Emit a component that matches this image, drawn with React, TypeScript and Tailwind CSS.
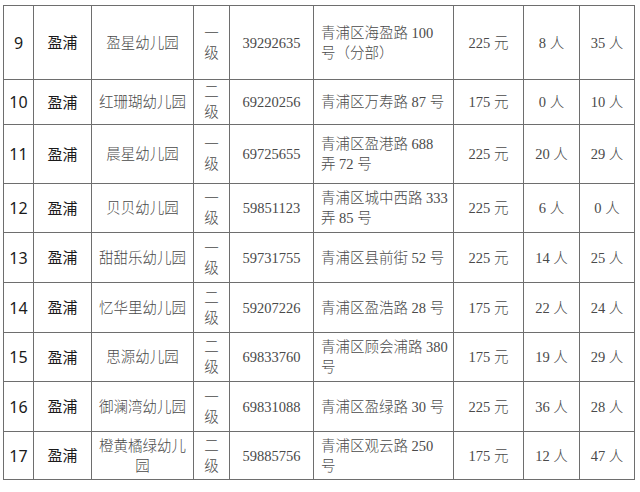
import React from "react";

type Row = {
  no: string;
  name: string;
  level: string;
  phone: string;
  addr: string;
  fee: string;
  a: string;
  b: string;
  h: number;
};

const rows: Row[] = [
  { no: "9", name: "盈星幼儿园", level: "一级", phone: "39292635", addr: "青浦区海盈路 100 号（分部）", fee: "225 元", a: "8 人", b: "35 人", h: 74 },
  { no: "10", name: "红珊瑚幼儿园", level: "二级", phone: "69220256", addr: "青浦区万寿路 87 号", fee: "175 元", a: "0 人", b: "10 人", h: 45 },
  { no: "11", name: "晨星幼儿园", level: "一级", phone: "69725655", addr: "青浦区盈港路 688 弄 72 号", fee: "225 元", a: "20 人", b: "29 人", h: 59 },
  { no: "12", name: "贝贝幼儿园", level: "一级", phone: "59851123", addr: "青浦区城中西路 333 弄 85 号", fee: "225 元", a: "6 人", b: "0 人", h: 49 },
  { no: "13", name: "甜甜乐幼儿园", level: "一级", phone: "59731755", addr: "青浦区县前街 52 号", fee: "225 元", a: "14 人", b: "25 人", h: 50 },
  { no: "14", name: "忆华里幼儿园", level: "二级", phone: "59207226", addr: "青浦区盈浩路 28 号", fee: "175 元", a: "22 人", b: "24 人", h: 50 },
  { no: "15", name: "思源幼儿园", level: "二级", phone: "69833760", addr: "青浦区顾会浦路 380 号", fee: "175 元", a: "19 人", b: "29 人", h: 49 },
  { no: "16", name: "御澜湾幼儿园", level: "一级", phone: "69831088", addr: "青浦区盈绿路 30 号", fee: "225 元", a: "36 人", b: "28 人", h: 50 },
  { no: "17", name: "橙黄橘绿幼儿园", level: "二级", phone: "59885756", addr: "青浦区观云路 250 号", fee: "175 元", a: "12 人", b: "47 人", h: 48 },
];

const sans = "font-['Noto_Sans','Noto_Sans_CJK_SC',sans-serif] text-[#1a1a1a]";
const serif = "font-['Liberation_Serif','Noto_Sans_CJK_SC',serif] font-light text-[#4a4a4a] text-[14.5px] leading-[20px]";
const td = "border border-[#6e6e6e] align-middle p-0";

export default function App() {
  return (
    <div className="w-[640px] h-[492px] bg-white pt-[5px] pl-[3px]">
      <table className="table-fixed border-collapse w-[631px]">
        <colgroup>
          <col className="w-[30px]" />
          <col className="w-[58px]" />
          <col className="w-[102px]" />
          <col className="w-[36px]" />
          <col className="w-[84px]" />
          <col className="w-[140px]" />
          <col className="w-[70px]" />
          <col className="w-[56px]" />
          <col className="w-[55px]" />
        </colgroup>
        <tbody>
          {rows.map((r) => (
            <tr key={r.no} style={{ height: r.h }}>
              <td className={`${td} ${sans} text-center text-[16px]`}>{r.no}</td>
              <td className={`${td} ${sans} text-center text-[15px]`}>盈浦</td>
              <td className={`${td} ${serif} text-center px-[5px]`}>{r.name}</td>
              <td className={`${td} ${serif} text-center px-[10px]`}>{r.level}</td>
              <td className={`${td} ${serif} text-center`}>{r.phone}</td>
              <td className={`${td} ${serif} text-left pl-[7px] pr-[3px]`}>{r.addr}</td>
              <td className={`${td} ${serif} text-center`}>{r.fee}</td>
              <td className={`${td} ${serif} text-center`}>{r.a}</td>
              <td className={`${td} ${serif} text-center`}>{r.b}</td>
            </tr>
          ))}
        </tbody>
      </table>
    </div>
  );
}
